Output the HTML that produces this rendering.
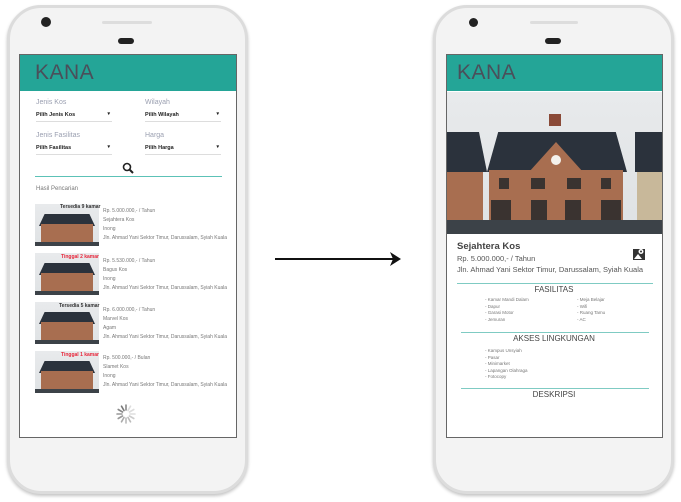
<!DOCTYPE html>
<html><head><style>
*{margin:0;padding:0;box-sizing:border-box}
body{width:681px;height:502px;background:#fff;position:relative;overflow:hidden;font-family:"Liberation Sans",sans-serif;color:#555}
.a{position:absolute}
.phone{position:absolute;top:5px;width:241px;height:489px;border:3px solid #dcdcdc;border-radius:34px;background:#f3f3f3;box-shadow:0 2px 3px #c4c4c4}
.screen{position:absolute;background:#fff;border:1px solid #666;overflow:hidden}
.hdr{position:absolute;left:0;top:0;right:0;height:36px;background:#24a597}
.hdr span{position:absolute;left:15px;top:6px;font-size:21px;color:#4a4f5a;letter-spacing:.5px}
.t{position:absolute;font-size:5px;color:#777;white-space:nowrap}
.lbl{position:absolute;font-size:7px;color:#9a9fb0}
.sel{position:absolute;font-size:5.5px;color:#222;font-weight:bold;border-bottom:1px solid #ddd;width:76px;height:10px}
.sel b{position:absolute;right:2px;top:-1px;font-size:5px}
.house{position:absolute;overflow:hidden;background:linear-gradient(#e8eaec,#dfe2e4)}
.house .r{position:absolute;background:#2b323c}
.house .w{position:absolute;background:#a86e50}
.house .d{position:absolute;background:#3a3330}
.house .g{position:absolute;left:0;right:0;bottom:0;background:#3c4248}
.sec{position:absolute;font-size:8px;color:#444;text-align:center;width:190px}
.line{position:absolute;height:1px;background:#7fcbc3}
</style></head><body>

<!-- phone 1 -->
<div class="phone" style="left:7px"></div>
<div class="a" style="left:41px;top:17px;width:10px;height:10px;border-radius:50%;background:#222"></div>
<div class="a" style="left:102px;top:21px;width:50px;height:3px;border-radius:2px;background:#ddd"></div>
<div class="a" style="left:118px;top:38px;width:16px;height:6px;border-radius:3px;background:#222"></div>
<div class="screen" style="left:19px;top:54px;width:218px;height:384px">
  <div class="hdr"><span>KANA</span></div>
  <div class="lbl" style="left:16px;top:44px">Jenis Kos</div>
  <div class="sel" style="left:16px;top:57px">Pilih Jenis Kos<b>▾</b></div>
  <div class="lbl" style="left:125px;top:44px">Wilayah</div>
  <div class="sel" style="left:125px;top:57px">Pilih Wilayah<b>▾</b></div>
  <div class="lbl" style="left:16px;top:77px">Jenis Fasilitas</div>
  <div class="sel" style="left:16px;top:90px">Pilih Fasilitas<b>▾</b></div>
  <div class="lbl" style="left:125px;top:77px">Harga</div>
  <div class="sel" style="left:125px;top:90px">Pilih Harga<b>▾</b></div>
  <svg class="a" style="left:102px;top:107px" width="12" height="12" viewBox="0 0 12 12"><circle cx="5" cy="5" r="3.5" fill="none" stroke="#222" stroke-width="1.6"/><path d="M7.5 7.5 L11 11" stroke="#222" stroke-width="2"/></svg>
  <div class="line" style="left:15px;top:121px;width:187px;height:1px;background:#5cc2b7"></div>
  <div class="t" style="left:16px;top:131px;font-size:6px">Hasil Pencarian</div>
</div>

<!-- phone 2 -->
<div class="phone" style="left:433px"></div>
<div class="a" style="left:469px;top:18px;width:9px;height:9px;border-radius:50%;background:#222"></div>
<div class="a" style="left:530px;top:21px;width:48px;height:3px;border-radius:2px;background:#ddd"></div>
<div class="a" style="left:545px;top:38px;width:16px;height:6px;border-radius:3px;background:#222"></div>
<div class="screen" style="left:446px;top:54px;width:217px;height:384px">
  <div class="hdr"><span style="left:10px">KANA</span></div>
  <div class="house" style="left:0;top:37px;width:217px;height:142px">
    <div class="r" style="left:0;top:40px;width:40px;height:40px;clip-path:polygon(0 0,80% 0,100% 100%,0 100%)"></div>
    <div class="w" style="left:0;top:80px;width:36px;height:50px"></div>
    <div class="r" style="left:40px;top:40px;width:140px;height:40px;clip-path:polygon(8% 0,38% 0,50% -20%,62% 0,92% 0,100% 100%,0 100%)"></div>
    <div class="w" style="left:42px;top:78px;width:134px;height:52px"></div>
    <div class="w" style="left:82px;top:50px;width:54px;height:30px;clip-path:polygon(50% 0,100% 100%,0 100%)"></div>
    <div class="w" style="left:102px;top:22px;width:12px;height:12px;background:#8a4a38"></div>
    <div class="a" style="left:104px;top:63px;width:10px;height:10px;border-radius:50%;background:#f4f1ec"></div>
    <div class="d" style="left:52px;top:86px;width:10px;height:11px"></div>
    <div class="d" style="left:84px;top:86px;width:14px;height:11px"></div>
    <div class="d" style="left:120px;top:86px;width:14px;height:11px"></div>
    <div class="d" style="left:154px;top:86px;width:10px;height:11px"></div>
    <div class="d" style="left:44px;top:108px;width:20px;height:22px"></div>
    <div class="d" style="left:84px;top:108px;width:16px;height:20px"></div>
    <div class="d" style="left:118px;top:108px;width:16px;height:20px"></div>
    <div class="d" style="left:154px;top:108px;width:20px;height:22px"></div>
    <div class="r" style="left:188px;top:40px;width:29px;height:40px"></div>
    <div class="w" style="left:190px;top:80px;width:27px;height:50px;background:#c8b89a"></div>
    <div class="g" style="height:14px"></div>
  </div>
  <div class="t" style="left:10px;top:186px;font-size:9.5px;font-weight:bold;color:#444">Sejahtera Kos</div>
  <div class="t" style="left:10px;top:199px;font-size:7.5px;color:#555">Rp. 5.000.000,- / Tahun</div>
  <div class="t" style="left:10px;top:210px;font-size:7.5px;color:#555">Jln. Ahmad Yani Sektor Timur, Darussalam, Syiah Kuala</div>
  <svg class="a" style="left:186px;top:193px" width="12" height="12" viewBox="0 0 12 12"><rect x="0" y="1" width="12" height="11" fill="#333"/><circle cx="8" cy="3.5" r="2.5" fill="#fff"/><circle cx="8" cy="3.5" r="1" fill="#333"/><path d="M1 11 L5 6 L9 11Z" fill="#fff"/></svg>
  <div class="line" style="left:10px;top:228px;width:196px"></div>
  <div class="sec" style="left:12px;top:230px">FASILITAS</div>
  <div class="t" style="left:38px;top:242px;line-height:6.5px;font-size:4.5px">- Kamar Mandi Dalam<br>- Dapur<br>- Garasi Motor<br>- Jemuran</div>
  <div class="t" style="left:130px;top:242px;line-height:6.5px;font-size:4.5px">- Meja Belajar<br>- Wifi<br>- Ruang Tamu<br>- AC</div>
  <div class="line" style="left:14px;top:277px;width:188px"></div>
  <div class="sec" style="left:12px;top:279px">AKSES LINGKUNGAN</div>
  <div class="t" style="left:38px;top:293px;line-height:6.6px;font-size:4.5px">- Kampus Unsyiah<br>- Pasar<br>- Minimarket<br>- Lapangan Olahraga<br>- Fotocopy</div>
  <div class="line" style="left:14px;top:333px;width:188px"></div>
  <div class="sec" style="left:12px;top:335px">DESKRIPSI</div>
</div>

<!-- arrow -->
<div class="a" style="left:275px;top:258px;width:122px;height:2px;background:#111"></div>
<svg class="a" style="left:390px;top:252px" width="12" height="14"><path d="M0 0 L11 7 L0 14 L3 7Z" fill="#111"/></svg>

<!-- list items -->
<div class="house" style="left:35px;top:204px;width:64px;height:42px"><div class="r" style="left:4px;top:10px;width:56px;height:12px;clip-path:polygon(0 100%,10% 0,90% 0,100% 100%)"></div><div class="w" style="left:6px;top:20px;width:52px;height:18px"></div><div class="g" style="height:4px"></div></div>
<div class="t" style="left:60px;top:204px;font-size:5px;color:#333;font-weight:bold">Tersedia 9 kamar</div>
<div class="t" style="left:103px;top:208px">Rp. 5.000.000,- / Tahun</div>
<div class="t" style="left:103px;top:217px">Sejahtera Kos</div>
<div class="t" style="left:103px;top:226px">Inong</div>
<div class="t" style="left:103px;top:235px">Jln. Ahmad Yani Sektor Timur, Darussalam, Syiah Kuala</div>

<div class="house" style="left:35px;top:253px;width:64px;height:42px"><div class="r" style="left:4px;top:10px;width:56px;height:12px;clip-path:polygon(0 100%,10% 0,90% 0,100% 100%)"></div><div class="w" style="left:6px;top:20px;width:52px;height:18px"></div><div class="g" style="height:4px"></div></div>
<div class="t" style="left:61px;top:254px;font-size:5px;color:#e8283c;font-weight:bold">Tinggal 2 kamar</div>
<div class="t" style="left:103px;top:258px">Rp. 5.530.000,- / Tahun</div>
<div class="t" style="left:103px;top:267px">Bagus Kos</div>
<div class="t" style="left:103px;top:276px">Inong</div>
<div class="t" style="left:103px;top:285px">Jln. Ahmad Yani Sektor Timur, Darussalam, Syiah Kuala</div>

<div class="house" style="left:35px;top:302px;width:64px;height:42px"><div class="r" style="left:4px;top:10px;width:56px;height:12px;clip-path:polygon(0 100%,10% 0,90% 0,100% 100%)"></div><div class="w" style="left:6px;top:20px;width:52px;height:18px"></div><div class="g" style="height:4px"></div></div>
<div class="t" style="left:59px;top:303px;font-size:5px;color:#333;font-weight:bold">Tersedia 5 kamar</div>
<div class="t" style="left:103px;top:307px">Rp. 6.000.000,- / Tahun</div>
<div class="t" style="left:103px;top:316px">Marvel Kos</div>
<div class="t" style="left:103px;top:325px">Agam</div>
<div class="t" style="left:103px;top:334px">Jln. Ahmad Yani Sektor Timur, Darussalam, Syiah Kuala</div>

<div class="house" style="left:35px;top:351px;width:64px;height:42px"><div class="r" style="left:4px;top:10px;width:56px;height:12px;clip-path:polygon(0 100%,10% 0,90% 0,100% 100%)"></div><div class="w" style="left:6px;top:20px;width:52px;height:18px"></div><div class="g" style="height:4px"></div></div>
<div class="t" style="left:61px;top:352px;font-size:5px;color:#e8283c;font-weight:bold">Tinggal 1 kamar</div>
<div class="t" style="left:103px;top:355px">Rp. 500.000,- / Bulan</div>
<div class="t" style="left:103px;top:364px">Slamet Kos</div>
<div class="t" style="left:103px;top:373px">Inong</div>
<div class="t" style="left:103px;top:382px">Jln. Ahmad Yani Sektor Timur, Darussalam, Syiah Kuala</div>

<svg class="a" style="left:115px;top:403px" width="22" height="22" viewBox="-11 -11 22 22">
<g stroke-width="1.6" stroke-linecap="round">
<line x1="0" y1="-4" x2="0" y2="-9" stroke="#888" transform="rotate(0)"/>
<line x1="0" y1="-4" x2="0" y2="-9" stroke="#ddd" transform="rotate(30)"/>
<line x1="0" y1="-4" x2="0" y2="-9" stroke="#ddd" transform="rotate(60)"/>
<line x1="0" y1="-4" x2="0" y2="-9" stroke="#ddd" transform="rotate(90)"/>
<line x1="0" y1="-4" x2="0" y2="-9" stroke="#ccc" transform="rotate(120)"/>
<line x1="0" y1="-4" x2="0" y2="-9" stroke="#bbb" transform="rotate(150)"/>
<line x1="0" y1="-4" x2="0" y2="-9" stroke="#bbb" transform="rotate(180)"/>
<line x1="0" y1="-4" x2="0" y2="-9" stroke="#aaa" transform="rotate(210)"/>
<line x1="0" y1="-4" x2="0" y2="-9" stroke="#999" transform="rotate(240)"/>
<line x1="0" y1="-4" x2="0" y2="-9" stroke="#999" transform="rotate(270)"/>
<line x1="0" y1="-4" x2="0" y2="-9" stroke="#888" transform="rotate(300)"/>
<line x1="0" y1="-4" x2="0" y2="-9" stroke="#777" transform="rotate(330)"/>
</g></svg>
</body></html>
